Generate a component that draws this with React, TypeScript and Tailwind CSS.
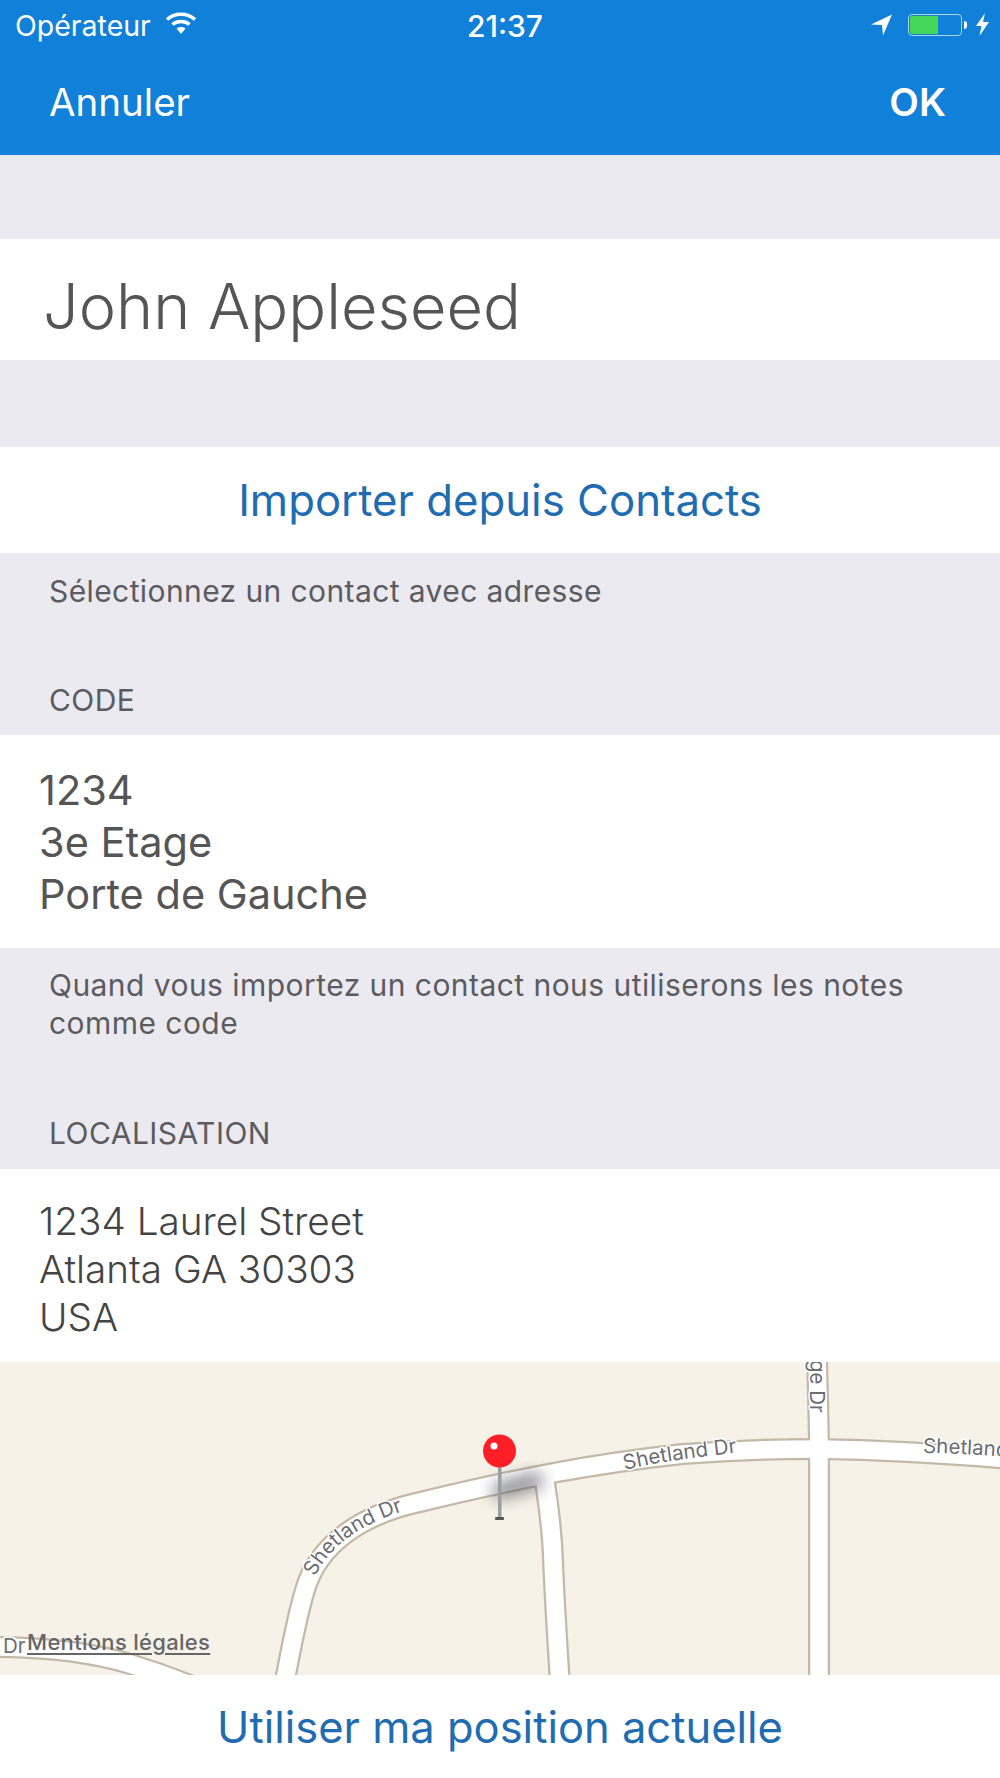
import React from 'react';

const font = { fontFamily: 'Inter, "Liberation Sans", sans-serif' };

function StatusBar() {
  return (
    <div className="h-[50px] pt-[2px] flex items-center justify-between pl-[15px] pr-[11px] relative text-white text-[28.5px]">
      <div className="flex items-center gap-[14px]">
        <span>Opérateur</span>
        <svg width="32" height="24" viewBox="0 0 32 24" fill="none" stroke="white" strokeWidth="3.4" className="-mt-[6px]">
          <path d="M2 8.5C9.5 1.5 22.5 1.5 30 8.5" />
          <path d="M7.5 13.5C12 9.5 20 9.5 24.5 13.5" />
          <path d="M16 23L11.5 17.5C14 15.5 18 15.5 20.5 17.5Z" fill="white" stroke="none" />
        </svg>
      </div>
      <span className="absolute left-[467px] text-[30px] font-medium">21:37</span>
      <div className="flex items-center -mt-[3px]">
        <svg width="22" height="22" viewBox="0 0 22 22" className="mr-[15px]">
          <path d="M0 10.5L21 0.5L12 21.5L11 11Z" fill="white" />
        </svg>
        <div className="w-[54px] h-[22px] border border-[#a9d4f5] rounded-[4px] p-[1px] flex">
          <div className="w-[28px] h-full bg-[#44d75a] rounded-l-[2px]" />
        </div>
        <div className="w-[3px] h-[8px] bg-white rounded-r-[3px] ml-[2px] mr-[9px]" />
        <svg width="13" height="23" viewBox="0 0 13 23">
          <path d="M9 0L0 13H5.5L3.5 23L13 9H7Z" fill="white" />
        </svg>
      </div>
    </div>
  );
}

function MapView() {
  const casing = '#c4b8a8';
  const roads = [
    'M-10 1647C40 1647 90 1652 130 1664C150 1670 170 1677 190 1685',
    'M284 1685C291 1650 296 1620 305 1590C318 1545 360 1515 420 1502C520 1478 590 1464 683 1454C750 1449 790 1449 819 1449C880 1450 950 1454 1010 1459',
    'M543 1470C548 1500 552 1530 553 1560C555 1610 558 1650 560 1685',
    'M817 1355C818 1400 819 1430 819 1449L819 1685',
  ];
  return (
    <div className="h-[313px] relative bg-[#f7f2e8] overflow-hidden">
      <svg width="1000" height="313" viewBox="0 1362 1000 313" className="block" style={{ fontFamily: 'Inter, sans-serif' }}>
        <defs>
          <filter id="pinBlur" x="-60%" y="-200%" width="220%" height="500%">
            <feGaussianBlur stdDeviation="8" />
          </filter>
          <path id="labelA" d="M315 1577C330 1545 360 1525 406 1510" />
          <path id="labelB" d="M625 1470C660 1461 700 1457 742 1452" />
          <path id="labelC" d="M923 1453C950 1453 980 1455 1010 1457" />
        </defs>
        {roads.map((d) => (
          <path key={'c' + d} d={d} fill="none" stroke={casing} strokeWidth="22" />
        ))}
        {roads.map((d) => (
          <path key={'w' + d} d={d} fill="none" stroke="white" strokeWidth="17.5" />
        ))}
        <path d="M500 1491L535 1481" stroke="#55555f" strokeWidth="16" strokeLinecap="round" opacity="0.7" filter="url(#pinBlur)" />
        <g fill="#6d6d72" fontSize="20.5" stroke="#ffffff" strokeWidth="3" paintOrder="stroke" strokeLinejoin="round">
          <text><textPath href="#labelA">Shetland Dr</textPath></text>
          <text><textPath href="#labelB">Shetland Dr</textPath></text>
          <text><textPath href="#labelC">Shetland Dr</textPath></text>
          <text transform="translate(810 1360) rotate(90)">ge Dr</text>
          <text x="3" y="1653">Dr</text>
        </g>
        <rect x="498" y="1466" width="3.5" height="52" fill="#9a9fa4" />
        <rect x="495" y="1517" width="9" height="3" rx="1" fill="#555" />
        <circle cx="499.5" cy="1451" r="16.5" fill="#ff1f27" />
        <circle cx="494" cy="1446" r="3.5" fill="#ffffff" />
      </svg>
      <span className="absolute left-[27px] top-[267px] text-[22px] tracking-[0.3px] leading-[26px] font-medium text-[#66666a] underline underline-offset-[3px]">
        Mentions légales
      </span>
    </div>
  );
}

export default function App() {
  return (
    <div className="w-[1000px] h-[1778px] bg-[#ebeaf0] overflow-hidden flex flex-col" style={font}>
      {/* Header */}
      <div className="h-[155px] bg-[#1180d8] text-white">
        <StatusBar />
        <div className="h-[105px] flex items-center justify-between pl-[49px] pr-[54px] text-[38.5px]">
          <span>Annuler</span>
          <span className="font-semibold">OK</span>
        </div>
      </div>

      <div className="h-[84px]" />
      <div className="h-[121px] bg-white flex items-center pl-[43px] pt-[14px] text-[63px] font-light text-[#555555]">
        John Appleseed
      </div>
      <div className="h-[87px]" />
      <div className="h-[106px] bg-white flex items-center justify-center pt-[1px] text-[43.7px] text-[#1f6cb0]">
        Importer depuis Contacts
      </div>

      <div className="h-[182px] flex flex-col justify-between pl-[49px] pt-[19px] pb-[16px] text-[30px] tracking-[0.4px] leading-[38px] text-[#5b5b60]">
        <div>Sélectionnez un contact avec adresse</div>
        <div>CODE</div>
      </div>

      <div className="h-[213px] bg-white flex flex-col justify-center pl-[39px] pt-[1px] text-[41.5px] leading-[52px] text-[#555555]">
        <div>1234</div>
        <div>3e Etage</div>
        <div>Porte de Gauche</div>
      </div>

      <div className="h-[221px] flex flex-col justify-between pl-[49px] pr-[60px] pt-[18px] pb-[17px] text-[30px] tracking-[0.45px] leading-[38px] text-[#5b5b60]">
        <div>Quand vous importez un contact nous utiliserons les notes comme code</div>
        <div>LOCALISATION</div>
      </div>

      <div className="h-[193px] bg-white flex flex-col justify-center pl-[39px] pt-[6px] text-[38.7px] leading-[48px] font-light text-[#444444]">
        <div>1234 Laurel Street</div>
        <div>Atlanta GA 30303</div>
        <div>USA</div>
      </div>

      <MapView />

      <div className="flex-1 bg-white flex items-center justify-center pt-[2px] text-[43.5px] text-[#1f6cb0]">
        Utiliser ma position actuelle
      </div>
    </div>
  );
}
